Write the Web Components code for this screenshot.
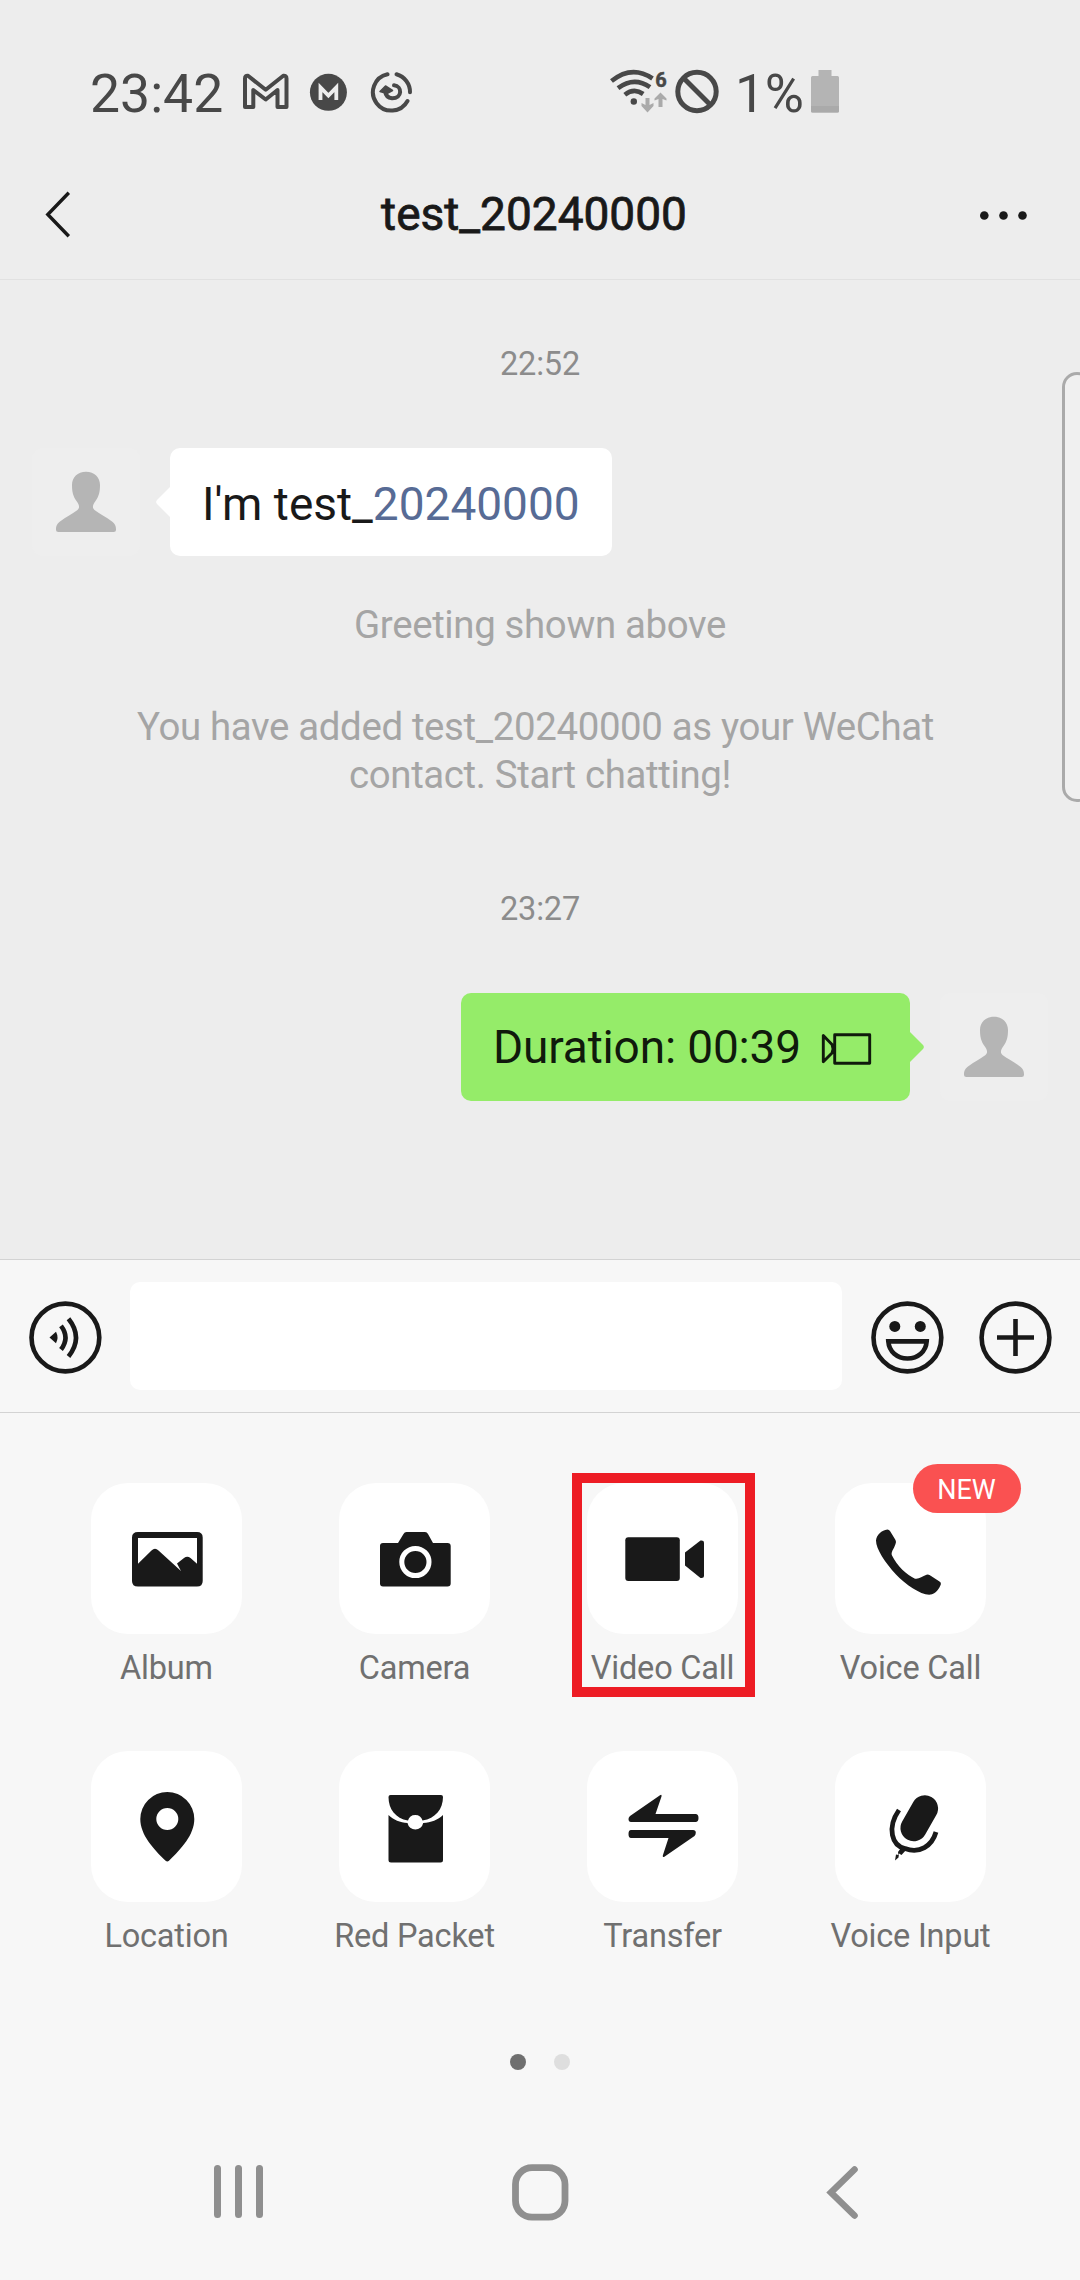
<!DOCTYPE html>
<html lang="en">
<head>
<meta charset="utf-8">
<title>Chat</title>
<style>
html,body{margin:0;padding:0}
body{width:1080px;height:2280px;background:#ededed;overflow:hidden;font-family:Roboto,"Liberation Sans",sans-serif;color:#191919}
</style>
</head>
<body>
<chat-app></chat-app>
<script>
const define = (name, css, html) => customElements.define(name, class extends HTMLElement {
  constructor() {
    super();
    const t = document.createElement('template');
    const body = typeof html === 'function' ? html(this) : html;
    t.innerHTML = `<style>*{box-sizing:border-box}svg{display:block;flex:none}${css}</style>${body}`;
    this.attachShadow({ mode: 'open' }).append(t.content.cloneNode(true));
  }
});

// Glyphs: [viewBox, markup]
const GLYPHS = {
  gmail: ['241 70 50 44', '<path d="M245 107V78.500Q245 75.500 248 75.800L265.700 89.800L283.300 75.800Q286.500 75.500 286.500 78.500V107H277.500V90L265.700 99.500L253.300 90V107Z" fill="none" stroke="#484848" stroke-width="4" stroke-linejoin="round"/>'],
  mega: ['308 70 41 44', '<circle cx="328.400" cy="92.300" r="18.500" fill="#484848"/><path d="M320.500 100V87.500L328.400 95.500L336.300 87.500V100" fill="none" stroke="#ededed" stroke-width="3.800"/>'],
  sync: ['369 70 45 44', '<g fill="none" stroke="#484848" stroke-width="4" stroke-linecap="round"><path d="M387.500 74.200A18.400 18.400 0 1 0 407.500 101"/><path d="M396.500 74.200A18.400 18.400 0 0 1 410 92.300"/><path d="M394 85.300C402.500 86 402.500 98.500 392 98.300C388 98 385.500 95 385 90.500"/></g><path d="M380 91.500L385.500 86L392.500 90.500L387 93.500Z" fill="#484848" stroke="#484848" stroke-width="1.500" stroke-linejoin="round"/>'],
  wifi: ['608 66 62 50', '<g fill="none" stroke="#484848" stroke-width="4.600"><path d="M611.500 81Q632 64.500 652.500 78.500"/><path d="M618 88.200Q634 76 650 87.200"/><path d="M624.800 94.800Q634 87.500 643.200 94"/></g><circle cx="633.800" cy="101.500" r="3.200" fill="#484848"/><g fill="#aaa"><path d="M645.500 98H649.500V105L653.500 103V106L647.500 112.500L641.500 106V103L645.500 105Z"/><path d="M658.500 107H662.500V99L666.500 100.500V98.500L660.500 92.500L654.500 98.500V100.500L658.500 99Z"/></g><text x="655.300" y="87" font-family="Roboto" font-size="20" font-weight="700" fill="#484848" stroke="#484848" stroke-width=".5">6</text>'],
  ban: ['675 68 44 46', '<g fill="none" stroke="#484848" stroke-width="5"><circle cx="697" cy="91.500" r="19.200"/><path d="M683.500 78L710.500 105"/></g>'],
  battery: ['811 70 28 43', '<path d="M818.500 70H831.500V76H837.500Q839 76 839 77.500V111Q839 112.500 837.500 112.500H812.500Q811 112.500 811 111V77.500Q811 76 812.500 76H818.500Z" fill="#b4b4b4"/><path d="M811 106H839V111Q839 112.500 837.500 112.500H812.500Q811 112.500 811 111Z" fill="#aaa"/>'],
  back: ['40 188 36 54', '<path d="M68.800 192.800L47.800 214.500L68.800 236.200" fill="none" stroke="#191919" stroke-width="3.400"/>'],
  more: ['978 208 50 16', '<g fill="#191919"><circle cx="984.300" cy="215.500" r="4.300"/><circle cx="1003.500" cy="215.500" r="4.300"/><circle cx="1022.500" cy="215.500" r="4.300"/></g>'],
  person: ['32 448 108 108', '<path d="M86 471.700C94.500 471.700 100 477.500 100 485C100 492 99 496 95.500 501C92 506 92.500 508 94.500 510C99.500 514 106 516.500 112 521.500C115.500 524.500 116 526.500 116 529.500Q116 532 113.500 532H58.500Q56 532 56 529.500C56 526.500 56.500 524.500 60 521.500C66 516.500 72.500 514 77.500 510C79.500 508 80 506 76.500 501C73 496 72 492 72 485C72 477.500 77.500 471.700 86 471.700Z" fill="#b5b5b5"/>'],
  cam: ['820 1029 53 35', '<path d="M834.700 1032.700H869.700V1061.200H834.700ZM823.300 1033.500V1059.800L832 1051Q834 1047 832 1042.500Z" fill="none" stroke="#101a0c" stroke-width="2.900" stroke-linejoin="round"/>'],
  voice: ['29 1301 73 73', '<g fill="none" stroke="#191919" stroke-width="4.600"><circle cx="65.400" cy="1337.500" r="33.900"/><path d="M61 1325.800Q70 1337.500 61 1349.500M68.500 1318.700Q83.500 1337.500 68.500 1356.500"/></g><path d="M49.500 1337.500L56 1331.700Q59 1337.500 56 1343.300Z" fill="#191919"/>'],
  smile: ['871 1301 73 73', '<g fill="none" stroke="#191919" stroke-width="4.600"><circle cx="907.400" cy="1337.500" r="33.900"/><path d="M888.300 1341.400H926.700C926 1351.500 918 1358.500 907.500 1358.500S889 1351.500 888.300 1341.400Z"/></g><circle cx="894.800" cy="1326.400" r="5.500" fill="#191919"/><circle cx="920.300" cy="1326.400" r="5.500" fill="#191919"/>'],
  plus: ['979 1301 73 73', '<g fill="none" stroke="#191919" stroke-width="4.600"><circle cx="1015.500" cy="1337.500" r="33.900"/><path d="M997 1337.500H1034M1015.500 1319V1356"/></g>'],
  album: ['91 1483 151 151', '<path fill-rule="evenodd" d="M138 1532H197Q202.700 1532 202.700 1537.500V1581Q202.700 1586.500 197 1586.500H138Q132 1586.500 132 1581V1537.500Q132 1532 138 1532ZM138 1538V1563.700L151.500 1550.500Q155 1547.200 158.500 1550.500L181 1571L177 1563.500L184 1558Q187.300 1555.500 190.500 1558L197 1563.700V1538Z"/>'],
  camera: ['339 1483 151 151', '<path d="M383 1543H398L403.500 1534Q404.500 1532 406.500 1532H425Q427 1532 428 1534L433 1543H447.500Q450.700 1543 450.700 1546V1583.500Q450.700 1586.500 447.500 1586.500H383Q380 1586.500 380 1583.500V1546Q380 1543 383 1543Z"/><circle cx="415.400" cy="1562" r="13.600" fill="none" stroke="#fff" stroke-width="5"/>'],
  video: ['587 1483 151 151', '<rect x="625.300" y="1537.300" width="54.500" height="43.700" rx="3"/><path d="M685 1552.500L700.500 1540.500Q704 1540 704 1542.500V1576Q704 1578.500 700.500 1578L685 1565.500Z"/>'],
  phone: ['835 1483 151 151', '<path d="M887.500 1529.500Q889 1529.500 890 1531L895.500 1540Q896.500 1542 895.500 1544C894 1549 890.500 1552 892 1555.500C897 1566 907 1575 915 1578.700C919 1579.500 922 1576.500 926.500 1574.800Q928 1574.200 929.500 1575L939.500 1581.500Q941.500 1582.500 940.800 1584.500C939 1589.500 935.500 1593.500 931 1594.500C922 1596 906 1585 896 1574.500C885 1562.500 876 1549 876 1540.500C876.500 1535 881.500 1530 887.500 1529.500Z"/>'],
  pin: ['91 1751 151 151', '<path fill-rule="evenodd" d="M167.300 1792A27 27 0 0 1 194.300 1819C194.300 1835 181 1849 169 1860.800Q167.300 1862 165.600 1860.800C153.600 1849 140.300 1835 140.300 1819A27 27 0 0 1 167.300 1792ZM167.300 1808A11 11 0 1 0 167.300 1830A11 11 0 1 0 167.300 1808Z"/>'],
  packet: ['339 1751 151 151', '<path d="M390.500 1795H441Q443 1795 443 1797C443 1809 435.500 1818.500 422.500 1820.500A7.500 7.500 0 0 0 408 1820.500C395.500 1818.500 388.500 1809 388.500 1797Q388.500 1795 390.500 1795ZM388.500 1815C393.500 1820 400 1822.500 407.500 1823A8 8 0 0 0 423.200 1823C431 1822.500 438 1820 443 1815V1860Q443 1862.500 440.500 1862.500H391Q388.500 1862.500 388.500 1860Z"/>'],
  transfer: ['587 1751 151 151', '<path d="M660 1795.300Q662 1794 661.500 1796.500L655.500 1814H695.500Q698.500 1814 698.500 1818Q698.500 1822 695.500 1822H631Q628.500 1822 628.500 1819Q628.500 1817.500 630 1816ZM631 1830H693Q695.800 1830 695.800 1832.500Q695.800 1834.500 694.500 1836L664 1857Q662.500 1857.500 662.800 1855.500L668.500 1838H631Q628.500 1838 628.500 1834Q628.500 1830 631 1830Z"/>'],
  mic: ['835 1751 151 151', '<path d="M924.800 1808.500L913.700 1828" fill="none" stroke="#191919" stroke-width="26.500" stroke-linecap="round"/><path d="M899 1810C886.500 1828 892 1846 905 1848.500C919.500 1854 932 1846 936 1832" fill="none" stroke="#191919" stroke-width="4.800"/><path d="M902 1846.500L906.500 1849.500L901.500 1855L899 1853.500L898.500 1857.500L895 1860.500L896 1854.500L898.500 1855L898 1852Z"/>'],
  recents: ['212 2164 54 58', '<g stroke="#8f8f8f" stroke-width="7" stroke-linecap="round"><path d="M217.500 2169.500V2215.500M238.500 2169.500V2215.500M259.500 2169.500V2215.500"/></g>'],
  home: ['511 2163 59 60', '<rect x="515.500" y="2167.700" width="49.500" height="49.500" rx="16.500" fill="none" stroke="#8f8f8f" stroke-width="6.800"/>'],
  navback: ['824 2163 36 60', '<path d="M854.500 2169.500L831 2192.500L854.500 2215.500" fill="none" stroke="#8f8f8f" stroke-width="6.600" stroke-linecap="round"/>']
};

define('ui-glyph', ':host{display:block;flex:none}svg{fill:#191919}', el => {
  const [box, art] = GLYPHS[el.getAttribute('name')];
  const [, , w, h] = box.split(' ');
  return `<svg width="${w}" height="${h}" viewBox="${box}">${art}</svg>`;
});

define('status-bar', `
:host{display:flex;height:140px;padding:0 241px 0 90px;align-items:flex-start;color:#484848;font-size:53.500px;line-height:62px}
.g{display:flex;align-items:flex-start}
.left{flex:1}
ui-glyph{margin-top:70px}
span{margin-top:63px;white-space:nowrap}
.left span{width:151px}
.pct{width:76px;margin-left:16px;letter-spacing:-.4px}`, `
<div class="g left"><span>23:42</span><ui-glyph name="gmail"></ui-glyph><ui-glyph name="mega" style="margin-left:17px"></ui-glyph><ui-glyph name="sync" style="margin-left:20px"></ui-glyph></div>
<div class="g"><ui-glyph name="wifi" style="margin-top:66px"></ui-glyph><ui-glyph name="ban" style="margin:68px 0 0 5px"></ui-glyph><span class="pct">1%</span><ui-glyph name="battery"></ui-glyph></div>`);

define('chat-header', `
:host{display:flex;height:140px;padding:0 52px 0 40px;align-items:flex-start;border-bottom:1px solid #e1e1e1}
.back{margin-top:48px}.more{margin-top:68px}
h1{flex:1;text-align:center;margin:47px 0 0 14px;font-size:46px;font-weight:400;line-height:54px;-webkit-text-stroke:.8px #191919}`, `
<ui-glyph class="back" name="back"></ui-glyph><h1><slot></slot></h1><ui-glyph class="more" name="more"></ui-glyph>`);

define('chat-note', `
:host{display:block;text-align:center;color:#a5a5a5;font-size:38.400px;letter-spacing:-.35px;line-height:48px;white-space:nowrap}
:host([time]){color:#8c8c8c;font-size:32.500px;letter-spacing:-.2px;line-height:38px}`, '<slot></slot>');

define('user-avatar', ':host{display:block;flex:none;width:108px;height:108px;border-radius:10px;background:#eee}', '<ui-glyph name="person"></ui-glyph>');

define('chat-message', `
:host{display:flex;height:108px;padding:0 32px;align-items:stretch}
:host([mine]){flex-direction:row-reverse}
.b{display:flex;align-items:center;border-radius:10px;background:#fff;padding:4px 32px 0;font-size:46px;line-height:54px;white-space:nowrap;color:#191919}
:host([mine]) .b{background:#95ec69;color:#101a0c;padding:0 33px 0 32px;letter-spacing:-.15px}
.tip{width:14px;height:30px;margin:39px 0 0 16px;fill:#fff}
:host([mine]) .tip{fill:#95ec69;transform:scaleX(-1);margin:39px 16px 0 0}`, `
<user-avatar></user-avatar><svg class="tip" viewBox="0 0 14 30"><path d="M14 0L1 13Q-.700 15 1 17L14 30Z"/></svg><div class="b"><slot></slot></div>`);

define('edge-handle', ':host{display:block;position:absolute;left:1062px;top:372px;width:30px;height:430px;box-sizing:border-box;border:3px solid #aaa;border-radius:16px;background:#f0f0f0}', '');

define('input-bar', `
:host{display:flex;height:154px;box-sizing:border-box;background:#f7f7f7;border-top:1px solid #d3d3d3;border-bottom:1px solid #d3d3d3;padding:0 28px 0 29px;align-items:center}
.field{flex:1;height:108px;border-radius:10px;background:#fff;margin:0 29px 0 28px}
ui-glyph{margin-top:2px}.p{margin-left:35px}`, `
<ui-glyph name="voice"></ui-glyph><div class="field"></div><ui-glyph name="smile"></ui-glyph><ui-glyph class="p" name="plus"></ui-glyph>`);

define('app-tile', `
:host{display:flex;flex-direction:column;align-items:center;position:relative;width:248px;height:268px}
.t{width:151px;height:151px;border-radius:37px;background:#fff}
.l{margin-top:15px;font-size:32.500px;letter-spacing:-.2px;line-height:38px;color:#707070;white-space:nowrap}
.badge{position:absolute;left:126px;top:-19px;width:108px;height:49px;border-radius:25px;background:#fa5151;color:#fff;font-size:27px;line-height:52px;text-align:center}
.box{position:absolute;left:33px;top:-10px;width:183px;height:224px;border:10px solid #ed1c24}`, el => `
<div class="t"><ui-glyph name="${el.getAttribute('icon')}"></ui-glyph></div><div class="l"><slot></slot></div>
${el.hasAttribute('badge') ? `<div class="badge">${el.getAttribute('badge')}</div>` : ''}${el.hasAttribute('marked') ? '<div class="box"></div>' : ''}`);

define('app-panel', `
:host{display:block;background:#f7f7f7;height:867px}
.grid{display:grid;grid-template-columns:repeat(4,248px);padding:70px 0 0 42.500px}
.dots{display:flex;justify-content:center;gap:28px;margin-top:35px}
.dots i{width:16px;height:16px;border-radius:50%;background:#dedede}.dots i:first-child{background:#6f6f6f}
.nav{display:flex;padding-left:212px;margin-top:93px}
.nav :nth-child(2){margin:0 254px 0 245px}`, `
<div class="grid">
<app-tile icon="album">Album</app-tile><app-tile icon="camera">Camera</app-tile><app-tile icon="video" marked>Video Call</app-tile><app-tile icon="phone" badge="NEW">Voice Call</app-tile>
<app-tile icon="pin">Location</app-tile><app-tile icon="packet">Red Packet</app-tile><app-tile icon="transfer">Transfer</app-tile><app-tile icon="mic">Voice Input</app-tile>
</div>
<div class="dots"><i></i><i></i></div>
<div class="nav"><ui-glyph name="recents"></ui-glyph><ui-glyph name="home"></ui-glyph><ui-glyph name="navback"></ui-glyph></div>`);

define('chat-app', `
:host{display:flex;flex-direction:column;width:1080px;height:2280px;background:#ededed;position:relative;overflow:hidden}
chat-header{box-sizing:border-box}
main{height:979px;display:flex;flex-direction:column}
.link{color:#576b95}.cam{margin:2px 4px 0 19px}`, `
<status-bar></status-bar>
<chat-header>test_20240000</chat-header>
<main>
<chat-note time style="margin-top:65px">22:52</chat-note>
<chat-message style="margin-top:65px"><span>I'm test_<span class="link">20240000</span></span></chat-message>
<chat-note style="margin-top:45px">Greeting shown above</chat-note>
<chat-note style="margin:54px 9px 0 0">You have added test_20240000 as your WeChat</chat-note>
<chat-note>contact. Start chatting!</chat-note>
<chat-note time style="margin-top:91px">23:27</chat-note>
<chat-message mine style="margin-top:65px"><span>Duration: 00:39</span><ui-glyph class="cam" name="cam"></ui-glyph></chat-message>
</main>
<edge-handle></edge-handle>
<input-bar></input-bar>
<app-panel></app-panel>`);
</script>
</body>
</html>
